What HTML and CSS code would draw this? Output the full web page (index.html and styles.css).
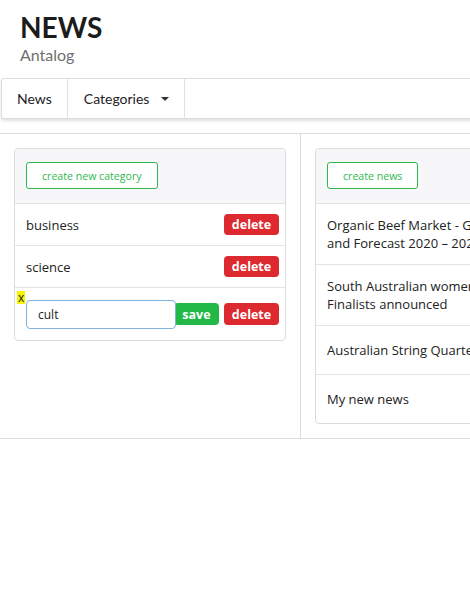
FILE: index.html
```html
<!DOCTYPE html>
<html>
<head>
<meta charset="utf-8">
<link rel="stylesheet" href="styles.css">
</head>
<body>
<header class="page-header">
  <h1 class="title">NEWS</h1>
  <div class="subtitle">Antalog</div>
</header>
<nav class="navbar">
  <a class="nav-item">News</a>
  <a class="nav-item nav-dropdown">Categories <span class="caret"></span></a>
</nav>
<main class="main">
  <section class="col col-left">
    <div class="card">
      <div class="card-header"><button class="btn-outline">create new category</button></div>
      <div class="cat-row"><span class="cat-name">business</span><button class="btn btn-danger">delete</button></div>
      <div class="cat-row"><span class="cat-name">science</span><button class="btn btn-danger">delete</button></div>
      <div class="cat-row edit-row">
        <mark class="close-x">x</mark>
        <input class="cat-input" type="text" value="cult">
        <button class="btn btn-success">save</button>
        <button class="btn btn-danger">delete</button>
      </div>
    </div>
  </section>
  <section class="col col-right">
    <div class="card">
      <div class="card-header"><button class="btn-outline">create news</button></div>
      <div class="news-row">Organic Beef Market - Global Industry Analysis, Size, Share, Growth, Trends,<br>and Forecast 2020 – 2027</div>
      <div class="news-row">South Australian women in business and leadership awards 2020<br>Finalists announced</div>
      <div class="news-row">Australian String Quartet announces its 2021 season</div>
      <div class="news-row">My new news</div>
    </div>
  </section>
</main>
</body>
</html>
```
FILE: styles.css
```css
html, body { margin: 0; padding: 0; background: #fff; }
body { font-family: "Lato", sans-serif; color: #222; width: 470px; overflow: hidden; }

.page-header { padding: 10px 20px 0; height: 78px; box-sizing: border-box; }
.title { margin: 0; font-size: 28px; font-weight: 700; line-height: 34px; color: #1c1c1c; }
.subtitle { font-size: 16px; line-height: 20px; color: #6f6f6f; margin-top: 1px; }

.navbar {
  margin-left: 1px; width: 560px; height: 41px; box-sizing: border-box;
  border: 1px solid #dcdcdc; border-radius: 3px; background: #fff;
  box-shadow: 0 2px 3px rgba(0,0,0,0.12);
  display: flex; align-items: stretch;
}
.nav-item {
  display: flex; align-items: center; padding: 0 15px; font-size: 14px; color: #222;
  border-right: 1px solid #e0e0e0;
}
.nav-dropdown { padding-left: 16px; padding-right: 15px; }
.caret {
  display: inline-block; width: 0; height: 0; margin-left: 12px; margin-top: 1px;
  border-left: 4px solid transparent; border-right: 4px solid transparent; border-top: 4px solid #333;
}

.main {
  margin-top: 14px; display: flex; border-top: 1px solid #dcdcdc; border-bottom: 1px solid #dcdcdc;
  width: 900px;
}
.col { padding: 14px; box-sizing: border-box; }
.col-left { width: 301px; border-right: 1px solid #dcdcdc; flex: none; }
.col-right { width: 599px; flex: none; }

.card { border: 1px solid #dcdcdc; border-radius: 4px; background: #fff; font-family: "Open Sans", sans-serif; }
.col-left .card { width: 272px; box-sizing: border-box; }
.card-header { background: #f7f7f9; height: 55px; padding: 13px 11px 0; box-sizing: border-box; border-bottom: 1px solid #e3e3e3; border-radius: 4px 4px 0 0; }
.btn-outline {
  height: 27px; padding: 0 15px; border: 1px solid #2cb84e; border-radius: 3px; background: #fff;
  color: #2eb84f; font-family: "Open Sans", sans-serif; font-size: 10.6px; cursor: pointer;
}
.cat-row {
  display: flex; align-items: center; height: 41px; padding: 0 6px 0 11px; border-bottom: 1px solid #e3e3e3;
  position: relative; font-size: 13px; color: #222;
}
.cat-name { flex: 1; }
.btn {
  border: none; border-radius: 4px; color: #fff; font-family: "Open Sans", sans-serif; font-weight: 700;
  font-size: 12.5px; height: 21px; line-height: 21px; padding: 0;
}
.btn-danger { background: #dc2a30; width: 55px; }
.btn-success { background: #22b847; width: 45px; margin-left: -2px; margin-right: 5px; height: 22px; }
.edit-row { height: 52px; border-bottom: none; }
.edit-row .btn-danger { height: 22px; }
.cat-input {
  width: 150px; height: 29px; box-sizing: border-box; border: 1px solid #7fb2dd; border-radius: 4px;
  padding: 0 11px; font-family: "Open Sans", sans-serif; font-size: 12px; color: #222; outline: none;
  position: relative; z-index: 1;
}
.close-x {
  position: absolute; left: 2px; top: 3px; background: #f5f500; color: #222; font-size: 12px; line-height: 13px;
  padding: 0 1px; font-family: "Open Sans", sans-serif;
}
.news-row {
  padding: 12px 11px; min-height: 24px; line-height: 18px; font-size: 13px; color: #222;
  border-bottom: 1px solid #e3e3e3; display: flex; flex-direction: column; justify-content: center;
  white-space: nowrap;
}
.news-row:last-child { border-bottom: none; }
```
